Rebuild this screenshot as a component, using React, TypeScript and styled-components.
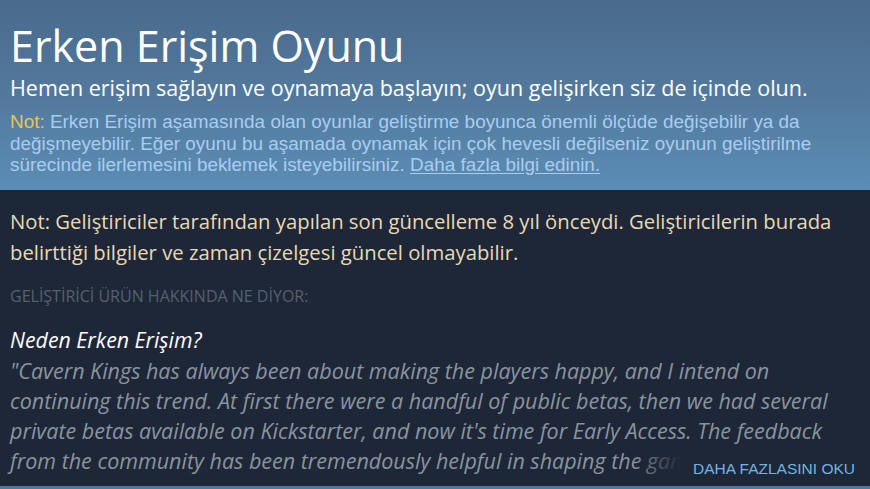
import React from "react";
import styled, { createGlobalStyle } from "styled-components";

const Global = createGlobalStyle`
  html, body { margin: 0; padding: 0; background: #1e2737; }
  body { width: 870px; height: 489px; overflow: hidden; }
`;

const Page = styled.div`
  width: 870px;
  height: 489px;
  display: flex;
  flex-direction: column;
  background: #1e2737;
  overflow: hidden;
`;

const Header = styled.div`
  height: 190px;
  flex: none;
  box-sizing: border-box;
  padding: 22px 10px 0 10px;
  background: linear-gradient(to bottom, #4a6a8b 0%, #52799d 50%, #5c8db4 100%);
  display: flex;
  flex-direction: column;
`;

const Title = styled.h1`
  margin: 0;
  font-family: "Open Sans", "Noto Sans", sans-serif;
  font-weight: 400;
  font-size: 43px;
  line-height: 48px;
  color: #ffffff;
`;

const Subtitle = styled.div`
  font-family: "Open Sans", "Noto Sans", sans-serif;
  font-size: 21.5px;
  line-height: 26px;
  color: #ffffff;
  margin-top: 5px;
  white-space: nowrap;
`;

const Note = styled.div`
  font-family: "Liberation Sans", Arial, sans-serif;
  font-size: 18.9px;
  line-height: 21.5px;
  color: #a9cdf0;
  margin-top: 10px;
  white-space: nowrap;
`;

const Yellow = styled.span`
  color: #e9c35b;
`;

const Link = styled.a`
  color: #a9cdf0;
  text-decoration: underline;
  text-underline-offset: 2px;
`;

const Body = styled.div`
  flex: 1;
  position: relative;
  padding: 16px 10px 0 10px;
  display: flex;
  flex-direction: column;
  border-bottom: 3px solid #4c7aa0;
`;

const Warning = styled.div`
  font-family: "Open Sans", "Noto Sans", sans-serif;
  font-size: 20.3px;
  line-height: 31px;
  color: #e8d9b4;
  white-space: nowrap;
`;

const SectionLabel = styled.div`
  font-family: "Open Sans", "Noto Sans", sans-serif;
  font-size: 16px;
  line-height: 18px;
  color: #56616d;
  margin-top: 19px;
`;

const QuoteTitle = styled.div`
  font-family: "Open Sans", "Noto Sans", sans-serif;
  font-style: italic;
  font-size: 21.3px;
  line-height: 26px;
  color: #ffffff;
  margin-top: 22px;
`;

const Quote = styled.div`
  font-family: "Open Sans", "Noto Sans", sans-serif;
  font-style: italic;
  font-size: 21.5px;
  line-height: 30px;
  color: #8a949f;
  margin-top: 3px;
  white-space: nowrap;
`;

const ReadMore = styled.div`
  position: absolute;
  right: 0;
  bottom: 3px;
  padding: 0 15px 0 60px;
  background: linear-gradient(to right, rgba(30, 39, 55, 0) 0%, #1e2737 48px);
  font-family: "Liberation Sans", Arial, sans-serif;
  font-size: 15.5px;
  line-height: 28px;
  color: #6fb6e0;
`;

export default function App() {
  return (
    <>
      <Global />
      <Page>
        <Header>
          <Title>Erken Erişim Oyunu</Title>
          <Subtitle>Hemen erişim sağlayın ve oynamaya başlayın; oyun gelişirken siz de içinde olun.</Subtitle>
          <Note>
            <Yellow>Not:</Yellow> Erken Erişim aşamasında olan oyunlar geliştirme boyunca önemli ölçüde değişebilir ya da
            <br />
            değişmeyebilir. Eğer oyunu bu aşamada oynamak için çok hevesli değilseniz oyunun geliştirilme
            <br />
            sürecinde ilerlemesini beklemek isteyebilirsiniz. <Link>Daha fazla bilgi edinin.</Link>
          </Note>
        </Header>
        <Body>
          <Warning>
            Not: Geliştiriciler tarafından yapılan son güncelleme 8 yıl önceydi. Geliştiricilerin burada
            <br />
            belirttiği bilgiler ve zaman çizelgesi güncel olmayabilir.
          </Warning>
          <SectionLabel>GELİŞTİRİCİ ÜRÜN HAKKINDA NE DİYOR:</SectionLabel>
          <QuoteTitle>Neden Erken Erişim?</QuoteTitle>
          <Quote>
            "Cavern Kings has always been about making the players happy, and I intend on
            <br />
            continuing this trend. At first there were a handful of public betas, then we had several
            <br />
            private betas available on Kickstarter, and now it's time for Early Access. The feedback
            <br />
            from the community has been tremendously helpful in shaping the game.
          </Quote>
          <ReadMore>DAHA FAZLASINI OKU</ReadMore>
        </Body>
      </Page>
    </>
  );
}
